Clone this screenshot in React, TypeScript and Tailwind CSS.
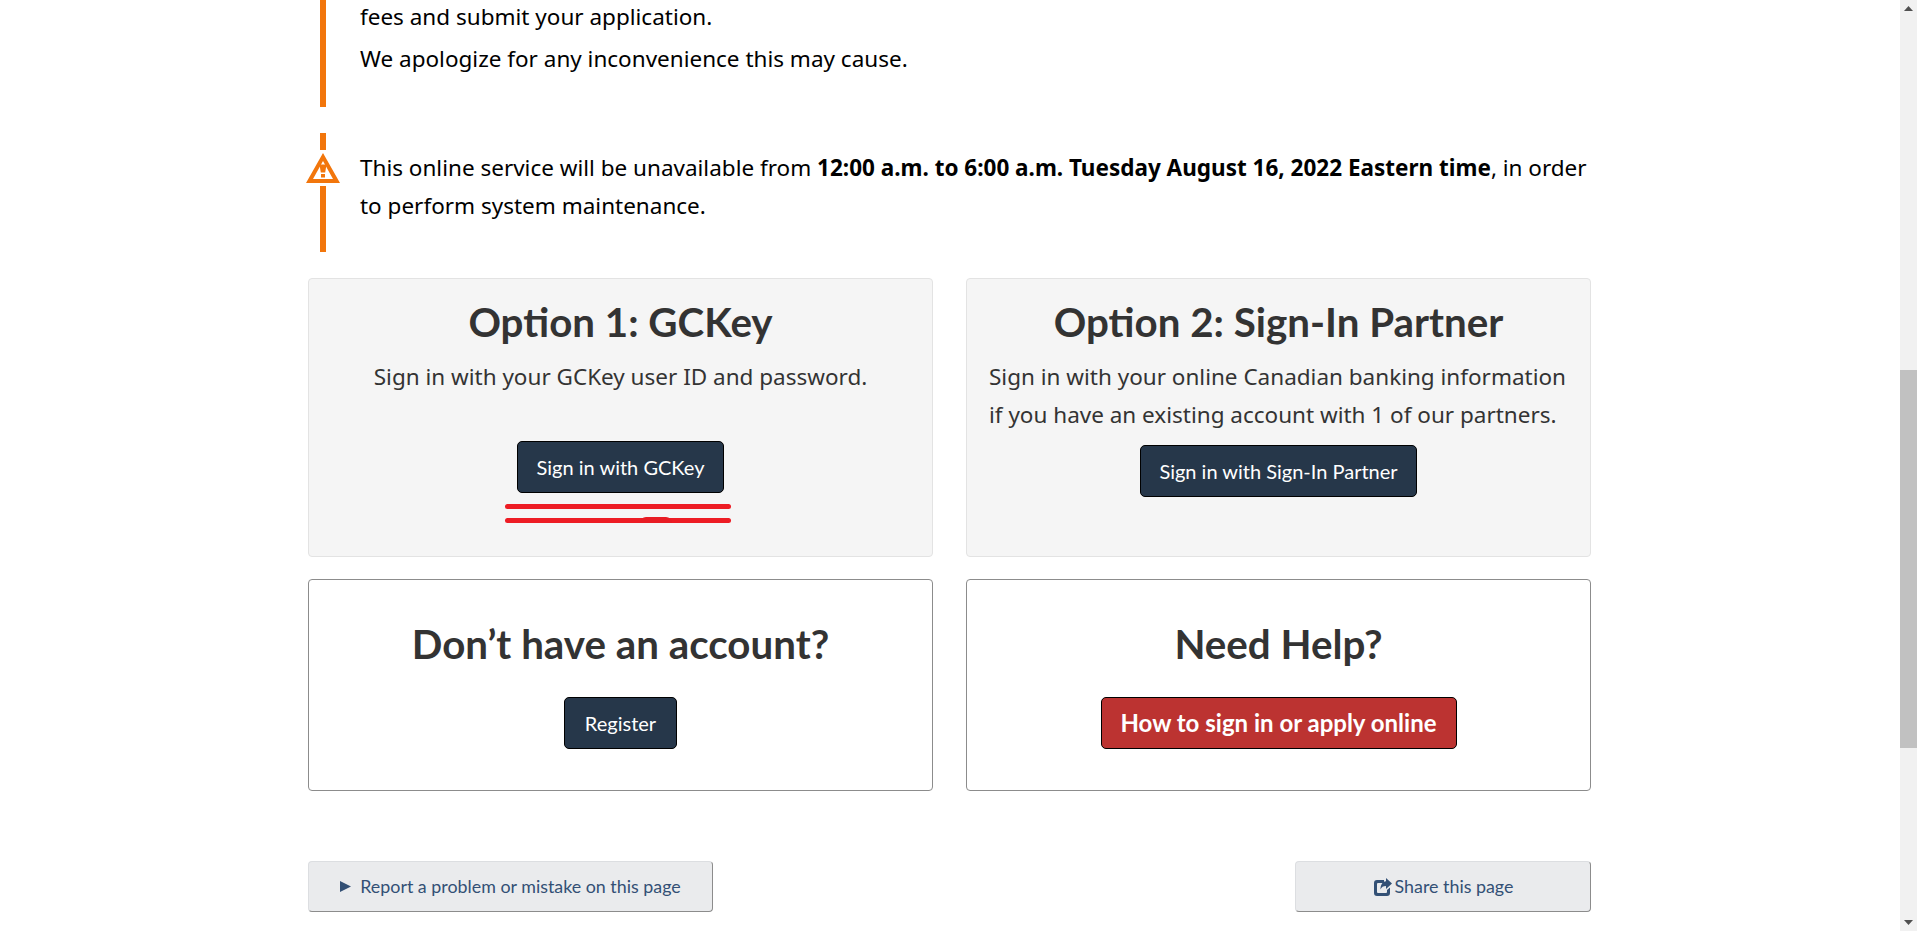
function WarningIcon() {
  return (
    <svg viewBox="0 0 34 30" className="h-[30px] w-[34px]">
      <path fillRule="evenodd" fill="#f2760c" d="M17 0 34 30H0ZM17 8 7 26H27Z" />
      <path fill="#f2760c" d="M13.500 11.500h7l-1.300 8h-4.400ZM15 21h4v3.500h-4Z" />
    </svg>
  );
}

function ShareIcon() {
  return (
    <svg viewBox="0 0 20 20" className="h-[20px] w-[20px]" fill="#335075">
      <path d="M4 3h7v3H5a1 1 0 0 0-1 1v8a1 1 0 0 0 1 1h8a1 1 0 0 0 1-1v-2l3-2.500V16a3 3 0 0 1-3 3H4a3 3 0 0 1-3-3V6a3 3 0 0 1 3-3Z" />
      <path d="M13 1l6 5.500-6 5.500V9c-3 0-4.500 1-5.500 3.500C7.500 8 9.500 4.500 13 4.300Z" />
    </svg>
  );
}

const darkButton =
  "rounded-[5px] border border-black bg-[#26374a] text-white font-['Lato',sans-serif] text-[20px] leading-[26px]";

export default function App() {
  return (
    <div className="flex h-[931px] overflow-hidden bg-white font-['Noto_Sans',sans-serif] text-[22.5px] text-black">
      <main className="flex-1 pl-[308px] pr-[309px]">
        <div className="ml-3 flow-root h-[107px] border-l-[6px] border-[#f2760c] pl-[34px]">
          <p className="-mt-[2px] leading-[38px]">fees and submit your application.</p>
          <p className="mt-[4px] leading-[38px]">We apologize for any inconvenience this may cause.</p>
        </div>

        <div className="relative mt-[26px] ml-3 h-[119px] border-l-[6px] border-[#f2760c] pl-[34px] pt-[16px] leading-[38px]">
          <span className="absolute left-[-20px] top-[17px] bg-white py-[3px]">
            <WarningIcon />
          </span>
          This online service will be unavailable from{" "}
          <strong className="font-bold">12:00 a.m. to 6:00 a.m. Tuesday August 16, 2022 Eastern time</strong>, in order
          to perform system maintenance.
        </div>

        <div className="mt-[26px] grid grid-cols-2 gap-x-[33px] text-[#333333]">
          <section className="relative h-[279px] rounded-[4px] border border-[#e3e3e3] bg-[#f5f5f5] px-[22px] pt-[17px] text-center">
            <h2 className="font-['Lato',sans-serif] text-[40.3px] font-bold leading-[52px]">Option 1: GCKey</h2>
            <p className="mt-[10px] leading-[38px]">Sign in with your GCKey user ID and password.</p>
            <button className={`${darkButton} mt-[45px] h-[52px] w-[207px]`}>Sign in with GCKey</button>
            <div className="absolute left-[196px] top-[225px] h-[5px] w-[226px] rounded-full bg-[#ed1c24]" />
            <div className="absolute left-[196px] top-[239px] h-[5px] w-[226px] rounded-full bg-[#ed1c24]" />
            <div className="absolute left-[331px] top-[238px] h-[6px] w-[32px] rounded-t-full bg-[#e81c24]" />
          </section>

          <section className="h-[279px] rounded-[4px] border border-[#e3e3e3] bg-[#f5f5f5] px-[22px] pt-[17px] text-center">
            <h2 className="font-['Lato',sans-serif] text-[40.3px] font-bold leading-[52px]">Option 2: Sign-In Partner</h2>
            <p className="mt-[10px] text-left leading-[38px]">
              Sign in with your online Canadian banking information if you have an existing account with 1 of our
              partners.
            </p>
            <button className={`${darkButton} mt-[11px] h-[52px] w-[277px]`}>Sign in with Sign-In Partner</button>
          </section>

          <section className="mt-[22px] h-[212px] rounded-[4px] border border-[#8c8c8c] bg-white pt-[38px] text-center">
            <h2 className="font-['Lato',sans-serif] text-[40.3px] font-bold leading-[52px]">Don’t have an account?</h2>
            <button className={`${darkButton} mt-[27px] h-[52px] w-[113px]`}>Register</button>
          </section>

          <section className="mt-[22px] h-[212px] rounded-[4px] border border-[#8c8c8c] bg-white pt-[38px] text-center">
            <h2 className="font-['Lato',sans-serif] text-[40.3px] font-bold leading-[52px]">Need Help?</h2>
            <button className="mt-[27px] h-[52px] w-[356px] rounded-[5px] border border-black bg-[#bc3331] font-['Lato',sans-serif] text-[24px] font-bold text-white">
              How to sign in or apply online
            </button>
          </section>
        </div>

        <div className="mt-[70px] flex justify-between font-['Lato',sans-serif] text-[17.85px] text-[#335075]">
          <button className="flex h-[51px] w-[405px] items-center justify-center gap-[9px] rounded-[4px] border border-[#dcdee1] border-r-[#8c8c8c] border-b-[#8c8c8c] bg-[#eaebed]">
            <svg viewBox="0 0 11 11" className="h-[11px] w-[11px]" fill="#335075"><path d="M0 0 11 5.500 0 11Z" /></svg>
            Report a problem or mistake on this page
          </button>
          <button className="flex h-[51px] w-[296px] items-center justify-center gap-[2px] rounded-[4px] border border-[#dcdee1] border-r-[#8c8c8c] border-b-[#8c8c8c] bg-[#eaebed]">
            <ShareIcon />
            Share this page
          </button>
        </div>
      </main>

      <aside className="flex w-[17px] shrink-0 flex-col bg-[#f1f1f1]">
        <div className="flex h-[17px] items-center justify-center">
          <svg viewBox="0 0 9 5" className="h-[5px] w-[9px]" fill="#505050"><path d="M4.500 0 9 5H0Z" /></svg>
        </div>
        <div className="mt-[353px] h-[378px] bg-[#c1c1c1]" />
        <div className="mt-auto flex h-[17px] items-center justify-center">
          <svg viewBox="0 0 9 5" className="h-[5px] w-[9px]" fill="#505050"><path d="M0 0H9L4.500 5Z" /></svg>
        </div>
      </aside>
    </div>
  );
}
